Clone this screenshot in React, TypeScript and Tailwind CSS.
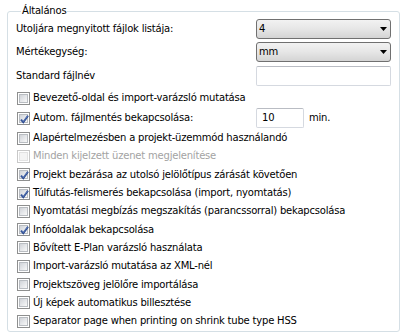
import React from "react";

const font = { fontFamily: '"DejaVu Sans", "Liberation Sans", Arial, sans-serif' };

function Check({ checked = false, disabled = false }: { checked?: boolean; disabled?: boolean }) {
  return (
    <span
      className={
        "relative flex w-[13px] h-[13px] shrink-0 items-center justify-center border bg-white " +
        (disabled ? "border-[#c8c8c8]" : "border-[#8e8f8f]")
      }
    >
      <span
        className={
          "w-[9px] h-[9px] border " +
          (disabled
            ? "border-[#e2e2e2] bg-[#f4f4f4]"
            : "border-[#b9bdc2] bg-gradient-to-br from-[#d0d3d8] via-[#e4e6e9] to-[#f8f8f8]")
        }
      />
      {checked && (
        <svg className="absolute left-[1px] top-[1px]" width="11" height="11" viewBox="0 0 11 11">
          <path d="M2 5.6 L4.3 8.2 L9 1.8" fill="none" stroke="#2b4a8f" strokeWidth="1.9" strokeLinejoin="miter" />
          <path d="M2.3 5.4 L4.3 7.6 L8.7 1.9" fill="none" stroke="#6f8dcc" strokeWidth="0.6" />
        </svg>
      )}
    </span>
  );
}

function Combo({ value }: { value: string }) {
  return (
    <div className="flex w-[135px] h-[20px] items-center justify-between rounded-[3px] border border-[#707070] bg-gradient-to-b from-[#f2f2f2] via-[#e6e6e6] to-[#d4d4d4] pl-[2px] pr-[3px] text-black">
      <span>{value}</span>
      <svg width="7" height="4" viewBox="0 0 7 4">
        <path d="M0 0 H7 L3.5 4 Z" fill="#000" />
      </svg>
    </div>
  );
}

function CheckRow({ label, checked, disabled }: { label: string; checked?: boolean; disabled?: boolean }) {
  return (
    <div className="flex h-[18.3px] items-center pl-[1px]">
      <Check checked={checked} disabled={disabled} />
      <span className={"ml-[3px] whitespace-nowrap " + (disabled ? "text-[#a3a3a3]" : "text-black")}>{label}</span>
    </div>
  );
}

export default function App() {
  return (
    <div className="w-[404px] h-[334px] bg-white text-[10px] leading-[14px] tracking-[-0.2px] text-black" style={font}>
      <fieldset className="ml-[7px] mt-[4px] w-[393px] h-[328px] rounded-[3px] border border-[#d5dfe5] pl-[8px] pr-[8px]">
        <legend className="ml-[5px] px-[1px]">Általános</legend>
        <div className="flex flex-col pt-[1px]">
          <div className="flex h-[20px] items-center justify-between">
            <span>Utoljára megnyitott fájlok listája:</span>
            <Combo value="4" />
          </div>
          <div className="mt-[3px] flex h-[20px] items-center justify-between">
            <span>Mértékegység:</span>
            <Combo value="mm" />
          </div>
          <div className="mt-[4px] flex h-[20px] items-center justify-between">
            <span>Standard fájlnév</span>
            <div className="w-[135px] h-[20px] rounded-[2px] border border-[#d5d9e0] border-t-[#b9bcc3] bg-white" />
          </div>
          <div className="mt-[2px] flex h-[20px] items-center pl-[1px]">
            <Check />
            <span className="ml-[3px]">Bevezető-oldal és import-varázsló mutatása</span>
          </div>
          <div className="flex h-[20px] items-center">
            <div className="flex w-[240px] items-center pl-[1px]">
              <Check checked />
              <span className="ml-[3px]">Autom. fájlmentés bekapcsolása:</span>
            </div>
            <div className="flex w-[48px] h-[20px] items-center rounded-[2px] border border-[#d5d9e0] border-t-[#b9bcc3] bg-white pl-[5px]">
              10
            </div>
            <span className="ml-[5px]">min.</span>
          </div>
          <div className="mt-[1px] flex flex-col">
            <CheckRow label="Alapértelmezésben a projekt-üzemmód használandó" />
            <CheckRow label="Minden kijelzett üzenet megjelenítése" disabled />
            <CheckRow label="Projekt bezárása az utolsó jelölőtípus zárását követően" checked />
            <CheckRow label="Túlfutás-felismerés bekapcsolása (import, nyomtatás)" checked />
            <CheckRow label="Nyomtatási megbízás megszakítás (parancssorral) bekapcsolása" />
            <CheckRow label="Infóoldalak bekapcsolása" checked />
            <CheckRow label="Bővített E-Plan varázsló használata" />
            <CheckRow label="Import-varázsló mutatása az XML-nél" />
            <CheckRow label="Projektszöveg jelölőre importálása" />
            <CheckRow label="Új képek automatikus billesztése" />
            <CheckRow label="Separator page when printing on shrink tube type HSS" />
          </div>
        </div>
      </fieldset>
    </div>
  );
}
